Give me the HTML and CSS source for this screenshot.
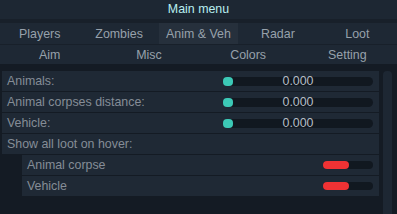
FILE: index.html
```html
<!doctype html>
<html>
  <head>
    <title>Main menu</title>
    <link rel="stylesheet" href="styles.css">
  </head>
  <body>
    <div class="menu">
      <div class="title">Main menu</div>

      <div class="tabs tabs-5">
        <div class="tab">Players</div>
        <div class="tab">Zombies</div>
        <div class="tab active">Anim &amp; Veh</div>
        <div class="tab">Radar</div>
        <div class="tab">Loot</div>
      </div>
      <div class="tabs tabs-4">
        <div class="tab">Aim</div>
        <div class="tab">Misc</div>
        <div class="tab">Colors</div>
        <div class="tab">Setting</div>
      </div>

      <div class="content">
        <div class="list">
          <div class="row">
            <span class="label">Animals:</span>
            <div class="slider"><span class="knob"></span><span class="value">0.000</span></div>
          </div>
          <div class="row">
            <span class="label">Animal corpses distance:</span>
            <div class="slider"><span class="knob"></span><span class="value">0.000</span></div>
          </div>
          <div class="row">
            <span class="label">Vehicle:</span>
            <div class="slider"><span class="knob"></span><span class="value">0.000</span></div>
          </div>
          <div class="row">
            <span class="label">Show all loot on hover:</span>
          </div>
          <div class="row sub">
            <span class="label">Animal corpse</span>
            <div class="toggle"><span class="on"></span></div>
          </div>
          <div class="row sub">
            <span class="label">Vehicle</span>
            <div class="toggle"><span class="on"></span></div>
          </div>
        </div>
        <div class="scrollbar"></div>
      </div>
    </div>
  </body>
</html>
```

FILE: styles.css
```css
/* general */
body {
  margin: 0;
  padding: 0;
  background-color: #141b24;
  font-family: "Liberation Sans", Arial, sans-serif;
  font-size: 12.4px;
}

.menu {
  width: 397px;
  height: 214px;
  overflow: hidden;
}

/* title bar */
.title {
  height: 19px;
  line-height: 19px;
  text-align: center;
  background-color: #1d2733;
  color: #b8eef0;
  border-bottom: 4px solid #18202a;
}

/* tabs */
.tabs {
  display: grid;
  background-color: #1e2834;
  color: #97a1ab;
}

.tabs-5 {
  grid-template-columns: repeat(5, 1fr);
  height: 21px;
  border-bottom: 1px solid #18202a;
}

.tabs-4 {
  grid-template-columns: repeat(4, 1fr);
  height: 19px;
}

.tab {
  display: flex;
  align-items: center;
  justify-content: center;
}

.tab.active {
  background-color: #26303c;
}

/* list */
.content {
  display: flex;
  margin-top: 7px;
}

.list {
  width: 377px;
  margin-left: 2px;
}

.row {
  display: flex;
  align-items: center;
  height: 20px;
  margin-bottom: 1px;
  padding-left: 5px;
  background-color: #1f2935;
  color: #858d97;
}

.row.sub {
  margin-left: 20px;
}

.label {
  flex: 1;
}

.slider {
  position: relative;
  width: 150px;
  height: 9px;
  margin-right: 6px;
  background-color: #111820;
  border-radius: 5px;
}

.knob {
  position: absolute;
  left: 0;
  top: 0;
  width: 10px;
  height: 9px;
  border-radius: 4px;
  background-color: #3cc9b6;
}

.value {
  position: absolute;
  left: 0;
  right: 0;
  top: -3px;
  line-height: 15px;
  text-align: center;
  color: #b6bec6;
}

.toggle {
  width: 50px;
  height: 8px;
  margin-right: 6px;
  background-color: #111820;
  border-radius: 4px;
}

.toggle .on {
  display: block;
  width: 26px;
  height: 8px;
  border-radius: 4px;
  background-color: #f03234;
}

.scrollbar {
  width: 9px;
  height: 150px;
  margin-left: 4px;
  background-color: #1d2733;
  border-radius: 4px 4px 0 0;
}
```
